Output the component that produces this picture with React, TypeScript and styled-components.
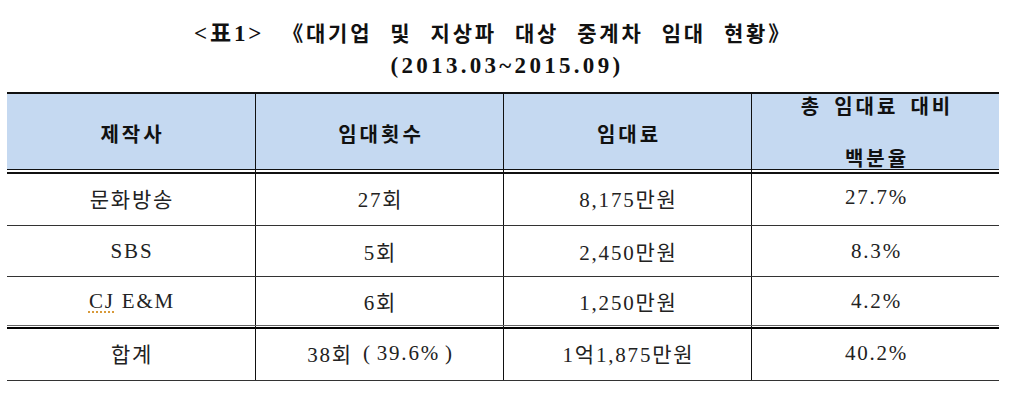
import React from "react";
import styled, { createGlobalStyle } from "styled-components";

const GlobalStyle = createGlobalStyle`
  html, body {
    margin: 0;
    padding: 0;
    background: #ffffff;
  }
  body {
    font-family: "Liberation Serif", "Noto Sans CJK KR", serif;
  }
`;

const Page = styled.div`
  width: 1024px;
  height: 411px;
  box-sizing: border-box;
  padding: 18px 0 0 7px;
  background: #ffffff;
  overflow: hidden;
`;

const TitleBlock = styled.header`
  width: 992px;
  display: flex;
  flex-direction: column;
  align-items: center;
  color: #111111;
  margin-bottom: 10px;
`;

const TitleLine = styled.div<{ $size: number; $ls: number; $ws?: number; $shift?: number }>`
  font-family: "Liberation Serif", "Noto Sans CJK KR", serif;
  font-weight: 700;
  font-size: ${(p) => p.$size}px;
  letter-spacing: ${(p) => p.$ls}px;
  word-spacing: ${(p) => p.$ws ?? 0}px;
  line-height: 32px;
  height: 32px;
  white-space: pre;
  margin-left: ${(p) => (p.$shift ?? 0) * 2}px;
`;

const TitleTag = styled.span`
  font-size: 23px;
`;

const Table = styled.div`
  width: 992px;
  display: flex;
  flex-direction: column;
`;

type RowKind = "head" | "first" | "middle" | "last" | "total";

const rowHeights: Record<RowKind, number> = {
  head: 78,
  first: 56,
  middle: 51,
  last: 49,
  total: 55,
};

const Row = styled.div<{ $kind: RowKind }>`
  display: grid;
  grid-template-columns: repeat(4, 248px);
  box-sizing: border-box;
  height: ${(p) => rowHeights[p.$kind]}px;
  background: ${(p) => (p.$kind === "head" ? "#c5d9f1" : "#ffffff")};
  border-top: ${(p) => (p.$kind === "head" ? "2px solid #111" : "none")};
  border-bottom: 1px solid
    ${(p) => (p.$kind === "head" ? "#111" : p.$kind === "last" ? "#666" : "#333")};
  box-shadow: ${(p) =>
    p.$kind === "first"
      ? "inset 0 2px 0 #fff, inset 0 4px 0 #111"
      : p.$kind === "total"
      ? "inset 0 1px 0 #fff, inset 0 3px 0 #000"
      : "none"};
`;

const Cell = styled.div<{ $head?: boolean; $stacked?: boolean }>`
  box-sizing: border-box;
  display: flex;
  flex-direction: ${(p) => (p.$stacked ? "column" : "row")};
  align-items: center;
  justify-content: ${(p) => (p.$stacked ? "flex-start" : "center")};
  gap: ${(p) => (p.$stacked ? "26px" : "0")};
  font-family: "Liberation Serif", "Noto Sans CJK KR", serif;
  font-size: ${(p) => (p.$head ? 20 : 21)}px;
  font-weight: ${(p) => (p.$head ? 700 : 400)};
  letter-spacing: ${(p) => (p.$head ? 3 : 1.8)}px;
  padding-left: ${(p) => (p.$head ? 3 : 2)}px;
  color: ${(p) => (p.$head ? "#111" : "#222")};
  white-space: pre;
  &:not(:first-child) {
    border-left: 1px solid #111;
  }
`;

const HeadLine = styled.span`
  display: block;
  line-height: 26px;
  height: 26px;
  word-spacing: 4px;
`;

const Paren = styled.span<{ $side: "open" | "close" }>`
  margin-left: ${(p) => (p.$side === "open" ? 3 : 5)}px;
  margin-right: ${(p) => (p.$side === "open" ? 5 : 0)}px;
`;

const SpellMark = styled.span`
  text-decoration-line: underline;
  text-decoration-style: dotted;
  text-decoration-color: #d89a3a;
  text-decoration-thickness: 2px;
  text-underline-offset: 4px;
`;

type DataRow = {
  kind: RowKind;
  company: React.ReactNode;
  count: React.ReactNode;
  fee: string;
  share: string;
};

const rows: DataRow[] = [
  { kind: "first", company: "문화방송", count: "27회", fee: "8,175만원", share: "27.7%" },
  { kind: "middle", company: "SBS", count: "5회", fee: "2,450만원", share: "8.3%" },
  {
    kind: "last",
    company: (
      <>
        <SpellMark>CJ</SpellMark> E&amp;M
      </>
    ),
    count: "6회",
    fee: "1,250만원",
    share: "4.2%",
  },
  {
    kind: "total",
    company: "합계",
    count: (
      <>
        38회 <Paren $side="open">(</Paren>39.6%<Paren $side="close">)</Paren>
      </>
    ),
    fee: "1억1,875만원",
    share: "40.2%",
  },
];

export default function App() {
  return (
    <>
      <GlobalStyle />
      <Page>
        <TitleBlock>
          <TitleLine $size={21} $ls={2.8} $ws={10} $shift={-10}>
            <TitleTag>{"<표1>"}</TitleTag>
            {" 《대기업 및 지상파 대상 중계차 임대 현황》"}
          </TitleLine>
          <TitleLine $size={23} $ls={3.3} $shift={4}>
            (2013.03~2015.09)
          </TitleLine>
        </TitleBlock>
        <Table>
          <Row $kind="head">
            <Cell $head>제작사</Cell>
            <Cell $head>임대횟수</Cell>
            <Cell $head>임대료</Cell>
            <Cell $head $stacked>
              <HeadLine>총 임대료 대비</HeadLine>
              <HeadLine>백분율</HeadLine>
            </Cell>
          </Row>
          {rows.map((r, i) => (
            <Row key={i} $kind={r.kind}>
              <Cell>{r.company}</Cell>
              <Cell>{r.count}</Cell>
              <Cell>{r.fee}</Cell>
              <Cell>{r.share}</Cell>
            </Row>
          ))}
        </Table>
      </Page>
    </>
  );
}
